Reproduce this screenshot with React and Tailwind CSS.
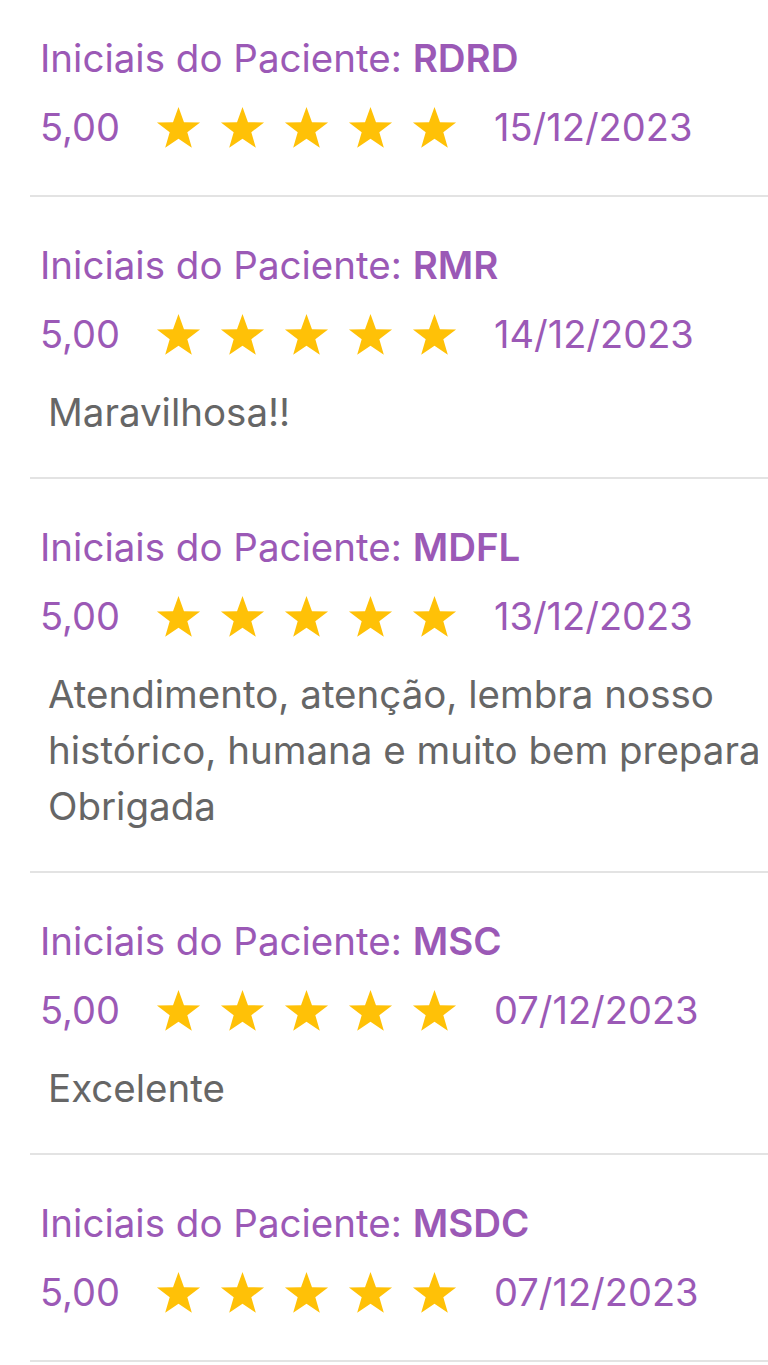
const reviews = [
  { initials: "RDRD", score: "5,00", date: "15/12/2023" },
  { initials: "RMR", score: "5,00", date: "14/12/2023", comment: "Maravilhosa!!" },
  {
    initials: "MDFL",
    score: "5,00",
    date: "13/12/2023",
    comment: "Atendimento, atenção, lembra nosso\nhistórico, humana e muito bem preparada\nObrigada",
  },
  { initials: "MSC", score: "5,00", date: "07/12/2023", comment: "Excelente" },
  { initials: "MSDC", score: "5,00", date: "07/12/2023" },
];

function Star() {
  return (
    <svg viewBox="0 0 24 24" className="h-[47px] w-[47px] shrink-0">
      <polygon
        points="12,1.5 14.8,9.3 23,9.4 16.5,14.4 18.8,22.3 12,17.7 5.2,22.3 7.5,14.4 1,9.4 9.2,9.3"
        fill="#ffc107"
      />
    </svg>
  );
}

export default function App() {
  return (
    <div className="min-h-[1365px] w-[768px] overflow-hidden bg-white pl-[30px] font-['Inter',sans-serif]">
      {reviews.map((r, i) => (
        <div
          key={i}
          className={`border-b-2 border-[#e3e3e3] px-[10px] ${i === 0 ? "pt-[34px]" : "pt-[44px]"} ${
            r.comment ? "pb-[37px]" : "pb-[44px]"
          }`}
        >
          <div className="h-[48px] whitespace-nowrap text-[38.5px] leading-[48px] text-[#9b59b6]">
            Iniciais do Paciente: <span className="font-semibold">{r.initials}</span>
          </div>
          <div className="mt-[21px] flex h-[48px] items-center text-[38px] text-[#9b59b6]">
            <span className="w-[115px]">{r.score}</span>
            <div className="flex gap-[17px]">
              {[0, 1, 2, 3, 4].map((s) => (
                <Star key={s} />
              ))}
            </div>
            <span className="ml-[36px] whitespace-nowrap">{r.date}</span>
          </div>
          {r.comment && (
            <div className="mt-[26px] overflow-hidden whitespace-pre pl-[8px] text-[38.5px] leading-[56px] text-[#666666]">
              {r.comment}
            </div>
          )}
        </div>
      ))}
    </div>
  );
}
